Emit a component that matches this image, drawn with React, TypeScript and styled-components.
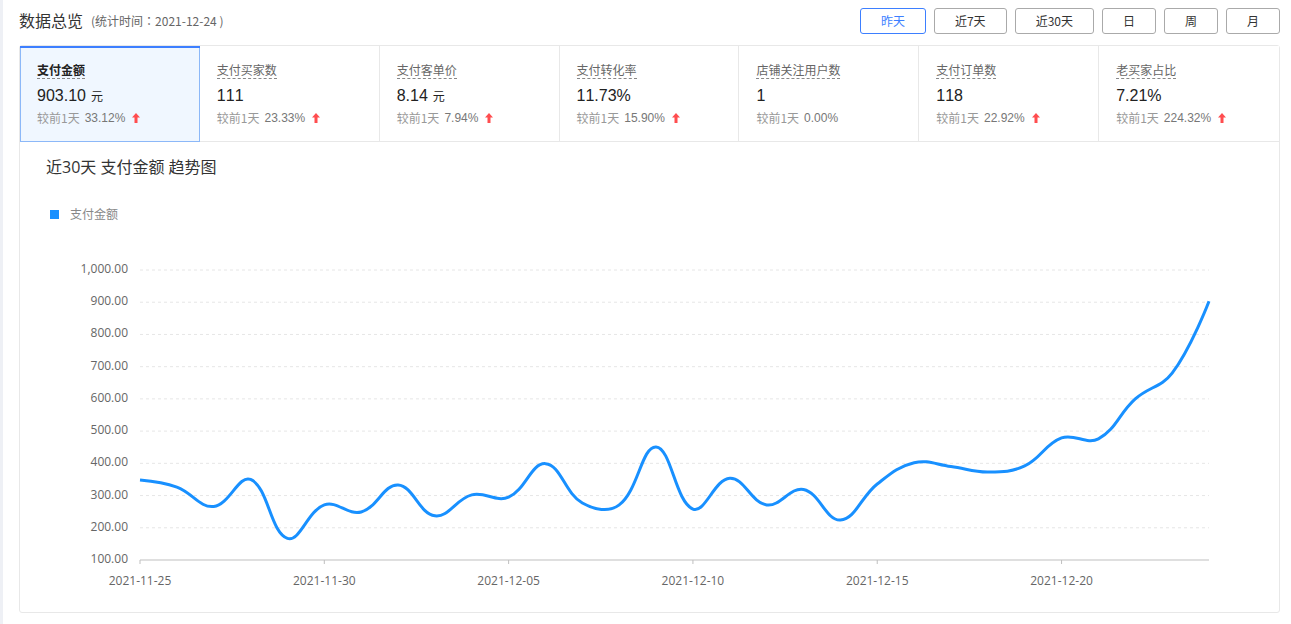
import React, { useLayoutEffect, useRef, useState } from 'react';
import styled, { createGlobalStyle, css } from 'styled-components';

const textFont = `"Open Sans", "Noto Sans CJK SC", sans-serif`;
const labelFont = `"Noto Sans CJK SC", sans-serif`;
const numberFont = `"Liberation Sans", "Noto Sans CJK SC", sans-serif`;

const GlobalStyle = createGlobalStyle`
  *, *::before, *::after { box-sizing: border-box; }
  body {
    margin: 0;
    background: #fff;
    color: #333;
    font-family: ${textFont};
    font-size: 12px;
  }
`;

const Page = styled.main`
  min-height: 100vh;
  padding: 8px 11px 11px 16px;
  border-left: 3px solid #eef0f5;
`;

const Header = styled.header`
  display: flex;
  align-items: center;
  justify-content: space-between;
  min-height: 26px;
  margin-bottom: 11px;
`;

const Heading = styled.div`
  display: flex;
  align-items: center;
  gap: 8px;
`;

const Title = styled.h1`
  margin: 0;
  font-size: 16px;
  font-weight: 400;
  line-height: 24px;
`;

const StatTime = styled.span`
  color: #666;
  font-family: ${labelFont};
  line-height: 20px;
`;

const Colon = styled.span`
  font-family: "Noto Sans CJK TC", sans-serif;
  line-height: 12px;
`;

const Periods = styled.div`
  display: flex;
  gap: 8px;
`;

const PeriodButton = styled.button<{ $active: boolean }>`
  height: 26px;
  padding: 0 20px;
  border: 1px solid ${(p) => (p.$active ? '#3d7fff' : '#aaa')};
  border-radius: 3px;
  background: #fff;
  color: ${(p) => (p.$active ? '#3d7fff' : '#333')};
  font-family: ${labelFont};
  font-size: 12px;
  line-height: 24px;
  cursor: pointer;
`;

const Panel = styled.section`
  border: 1px solid #e8e8e8;
  border-radius: 3px;
`;

const Metrics = styled.div`
  display: grid;
  grid-template-columns: repeat(7, 1fr);
`;

const MetricLabel = styled.span`
  border-bottom: 1px dashed #888;
  color: #666;
  line-height: 16px;
`;

const MetricCard = styled.button<{ $active: boolean }>`
  display: flex;
  flex-direction: column;
  align-items: flex-start;
  height: 96px;
  padding: 16px 16px 0 17px;
  border: 0;
  background: #fff;
  box-shadow: inset 0 -1px 0 #e8e8e8, inset -1px 0 0 #e8e8e8;
  font-family: ${labelFont};
  font-size: 12px;
  text-align: left;
  white-space: nowrap;
  cursor: pointer;

  &:last-child { box-shadow: inset 0 -1px 0 #e8e8e8; }

  ${(p) =>
    p.$active &&
    css`
      background: #f0f7ff;
      box-shadow: inset 0 2px 0 #3d7fff, inset 0 0 0 1px #8cb8f8;

      ${MetricLabel} {
        color: #222;
        font-weight: 700;
      }
    `}
`;

const MetricValue = styled.span`
  margin-top: 7px;
  color: #222;
  font-family: ${numberFont};
  font-size: 16px;
  font-kerning: none;
  line-height: 20px;
`;

const Unit = styled.small`
  margin-left: 5px;
  font-size: 12px;
  line-height: 12px;
`;

const Comparison = styled.span`
  display: flex;
  align-items: center;
  gap: 5px;
  margin-top: 4px;
  color: #999;
  line-height: 16px;
`;

const Change = styled.span`
  color: #777;
  font-family: ${numberFont};
  font-kerning: none;
`;

const ArrowIcon = styled.svg`
  display: block;
  width: 8px;
  height: 10px;
  margin-left: 2px;
  fill: #ff4d4f;
`;

const ChartTitle = styled.h2`
  margin: 15px 26px 29px;
  font-size: 16px;
  font-weight: 400;
  line-height: 20px;
`;

const Legend = styled.div`
  display: flex;
  align-items: center;
  gap: 11px;
  margin-left: 30px;
  color: #888;
  font-family: ${labelFont};
  line-height: 16px;
`;

const LegendMark = styled.span`
  width: 9px;
  height: 9px;
  background: #1890ff;
`;

const ChartSvg = styled.svg`
  display: block;
  width: 100%;
  height: 390px;
`;

const AxisText = styled.text`
  fill: #666;
  font-family: ${textFont};
  font-size: 12px;
`;

const periods = ['昨天', '近7天', '近30天', '日', '周', '月'];

interface Metric {
  label: string;
  value: string;
  unit?: string;
  change: string;
  up: boolean;
}

const metrics: Metric[] = [
  { label: '支付金额', value: '903.10', unit: '元', change: '33.12%', up: true },
  { label: '支付买家数', value: '111', change: '23.33%', up: true },
  { label: '支付客单价', value: '8.14', unit: '元', change: '7.94%', up: true },
  { label: '支付转化率', value: '11.73%', change: '15.90%', up: true },
  { label: '店铺关注用户数', value: '1', change: '0.00%', up: false },
  { label: '支付订单数', value: '118', change: '22.92%', up: true },
  { label: '老买家占比', value: '7.21%', change: '224.32%', up: true },
];

const amounts = [
  348, 326, 266, 350, 167, 271, 249, 333, 237, 302, 295, 399, 277, 271, 451,
  258, 354, 271, 319, 224, 336, 402, 390, 373, 392, 479, 476, 600, 680, 903.1,
];

const dateTicks = [
  '2021-11-25', '2021-11-30', '2021-12-05',
  '2021-12-10', '2021-12-15', '2021-12-20',
];

const valueTicks = [1000, 900, 800, 700, 600, 500, 400, 300, 200, 100];

type Point = [number, number];

// Catmull-Rom style smoothing: control arms follow the neighbours' chord.
function smoothPath(points: Point[]): string {
  const arms = points.map((p, i) => {
    const prev = points[i - 1];
    const next = points[i + 1];
    if (!prev || !next) return { before: p, after: p };
    const vx = (next[0] - prev[0]) * 0.4;
    const vy = (next[1] - prev[1]) * 0.4;
    const d0 = Math.hypot(p[0] - prev[0], p[1] - prev[1]);
    const d1 = Math.hypot(next[0] - p[0], next[1] - p[1]);
    const a = d0 / (d0 + d1);
    const b = d1 / (d0 + d1);
    return {
      before: [p[0] - vx * a, p[1] - vy * a] as Point,
      after: [p[0] + vx * b, p[1] + vy * b] as Point,
    };
  });
  return points
    .map((p, i) =>
      i === 0 ? `M${p}` : `C${arms[i - 1].after} ${arms[i].before} ${p}`
    )
    .join(' ');
}

function TrendChart() {
  const ref = useRef<SVGSVGElement>(null);
  const [width, setWidth] = useState(1259);

  useLayoutEffect(() => {
    const node = ref.current;
    if (!node) return;
    const measure = () => setWidth(node.getBoundingClientRect().width);
    measure();
    const observer = new ResizeObserver(measure);
    observer.observe(node);
    return () => observer.disconnect();
  }, []);

  const left = 120;
  const right = width - 70;
  const top = 48;
  const bottom = 338;
  const x = (i: number) => left + ((right - left) * i) / (amounts.length - 1);
  const y = (v: number) => bottom - ((v - 100) / 900) * (bottom - top);

  return (
    <ChartSvg ref={ref} role="img" aria-label="近30天 支付金额 趋势图">
      {valueTicks.map((v) => (
        <g key={v}>
          {v > 100 && (
            <line x1={left} x2={right} y1={y(v)} y2={y(v)} stroke="#e6e6e6" strokeDasharray="3 3" />
          )}
          <AxisText x={left - 12} y={y(v) + 3} textAnchor="end">
            {v.toLocaleString('en-US', { minimumFractionDigits: 2 })}
          </AxisText>
        </g>
      ))}
      <line x1={left} x2={right} y1={bottom} y2={bottom} stroke="#bfbfbf" />
      {dateTicks.map((date, i) => (
        <g key={date}>
          <line x1={x(i * 5)} x2={x(i * 5)} y1={bottom} y2={bottom + 4} stroke="#bfbfbf" />
          <AxisText x={x(i * 5)} y={bottom + 25} textAnchor="middle">
            {date}
          </AxisText>
        </g>
      ))}
      <path
        d={smoothPath(amounts.map((v, i) => [x(i), y(v)] as Point))}
        fill="none"
        stroke="#1890ff"
        strokeWidth="3"
        strokeLinejoin="round"
      />
    </ChartSvg>
  );
}

export default function App() {
  const [period, setPeriod] = useState(0);
  const [metric, setMetric] = useState(0);

  return (
    <>
      <GlobalStyle />
      <Page lang="zh-CN">
        <Header>
          <Heading>
            <Title>数据总览</Title>
            <StatTime>
              (统计时间<Colon lang="zh-TW">：</Colon>2021-12-24 )
            </StatTime>
          </Heading>
          <Periods>
            {periods.map((name, i) => (
              <PeriodButton
                key={name}
                type="button"
                $active={i === period}
                aria-pressed={i === period}
                onClick={() => setPeriod(i)}
              >
                {name}
              </PeriodButton>
            ))}
          </Periods>
        </Header>
        <Panel>
          <Metrics>
            {metrics.map((m, i) => (
              <MetricCard
                key={m.label}
                type="button"
                $active={i === metric}
                aria-pressed={i === metric}
                onClick={() => setMetric(i)}
              >
                <MetricLabel>{m.label}</MetricLabel>
                <MetricValue>
                  {m.value}
                  {m.unit && <Unit>{m.unit}</Unit>}
                </MetricValue>
                <Comparison>
                  <span>较前1天</span>
                  <Change>{m.change}</Change>
                  {m.up && (
                    <ArrowIcon viewBox="0 0 8 10" aria-hidden="true">
                      <path d="M4 0 L8 4.5 H5.5 V10 H2.5 V4.5 H0 Z" />
                    </ArrowIcon>
                  )}
                </Comparison>
              </MetricCard>
            ))}
          </Metrics>
          <ChartTitle>近30天 支付金额 趋势图</ChartTitle>
          <Legend>
            <LegendMark />
            <span>支付金额</span>
          </Legend>
          <TrendChart />
        </Panel>
      </Page>
    </>
  );
}
